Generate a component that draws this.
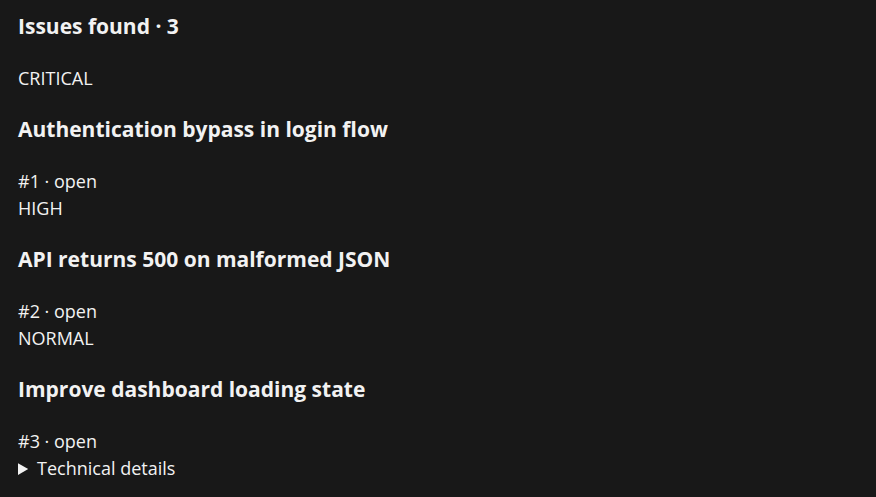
const issues = [
  { id: 1, severity: 'CRITICAL', title: 'Authentication bypass in login flow', status: 'open' },
  { id: 2, severity: 'HIGH', title: 'API returns 500 on malformed JSON', status: 'open' },
  { id: 3, severity: 'NORMAL', title: 'Improve dashboard loading state', status: 'open' },
];

export default function App() {
  return (
    <div className="min-h-screen bg-[#181818] text-[#f2f2f2] px-[18px] pt-[12px] font-['Open_Sans',sans-serif] text-[18px] leading-[27px]">
      <h2 className="text-[21px] leading-[28px] font-bold mb-[25px]">Issues found · 3</h2>
      <ul>
        {issues.map((issue) => (
          <li key={issue.id}>
            <div>{issue.severity}</div>
            <h3 className="text-[21px] leading-[28px] font-bold mt-[23px] mb-[25px]">{issue.title}</h3>
            <div>#{issue.id} · {issue.status}</div>
          </li>
        ))}
      </ul>
      <details>
        <summary className="cursor-pointer">Technical details</summary>
      </details>
    </div>
  );
}
